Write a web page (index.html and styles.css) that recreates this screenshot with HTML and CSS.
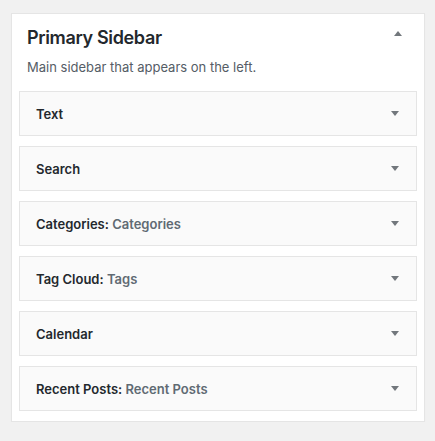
FILE: index.html
```html
<!DOCTYPE html>
<html>
<head>
<meta charset="utf-8">
<link rel="stylesheet" href="styles.css">
</head>
<body>
<div class="panel">
  <div class="panel-head">
    <h2 class="panel-title">Primary Sidebar</h2>
    <span class="arrow arrow-up"></span>
  </div>
  <p class="panel-desc">Main sidebar that appears on the left.</p>
  <div class="widgets">
    <div class="widget"><span class="widget-title">Text</span><span class="arrow arrow-down"></span></div>
    <div class="widget"><span class="widget-title">Search</span><span class="arrow arrow-down"></span></div>
    <div class="widget"><span class="widget-title">Categories:<span class="in-title"> Categories</span></span><span class="arrow arrow-down"></span></div>
    <div class="widget"><span class="widget-title">Tag Cloud:<span class="in-title"> Tags</span></span><span class="arrow arrow-down"></span></div>
    <div class="widget"><span class="widget-title">Calendar</span><span class="arrow arrow-down"></span></div>
    <div class="widget"><span class="widget-title">Recent Posts:<span class="in-title"> Recent Posts</span></span><span class="arrow arrow-down"></span></div>
  </div>
</div>
</body>
</html>
```
FILE: styles.css
```css
html, body {
  margin: 0;
  padding: 0;
  background: #f1f1f1;
}
body {
  padding: 13px 10px 0 11px;
  font-family: Inter, "Liberation Sans", sans-serif;
  color: #23282d;
}
.panel {
  background: #fff;
  border: 1px solid #e5e5e5;
  box-shadow: 0 1px 1px rgba(0,0,0,0.04);
  padding: 0 7px 10px;
  box-sizing: border-box;
  width: 414px;
}
.panel-head {
  display: flex;
  align-items: flex-start;
  justify-content: space-between;
  padding: 12px 15px 0 8px;
  height: 24px;
}
.panel-title {
  margin: 0;
  font-size: 18px;
  font-weight: 600;
  line-height: 24px;
  letter-spacing: -0.35px;
  color: #23282d;
}
.panel-desc {
  margin: 8px 0 0 8px;
  font-size: 13px;
  line-height: 18px;
  color: #555d66;
}
.widgets {
  margin-top: 15px;
  display: flex;
  flex-direction: column;
  gap: 10px;
}
.widget {
  height: 45px;
  box-sizing: border-box;
  border: 1px solid #e5e5e5;
  background: #fafafa;
  display: flex;
  align-items: center;
  justify-content: space-between;
  padding: 0 17px 0 16px;
}
.widget-title {
  font-size: 13px;
  font-weight: 600;
  color: #23282d;
}
.in-title {
  color: #606a73;
}
.arrow {
  width: 0;
  height: 0;
  border-left: 4px solid transparent;
  border-right: 4px solid transparent;
}
.arrow-down {
  border-top: 5px solid #72777c;
}
.arrow-up {
  margin-top: 5px;
  border-bottom: 5px solid #72777c;
}
```
